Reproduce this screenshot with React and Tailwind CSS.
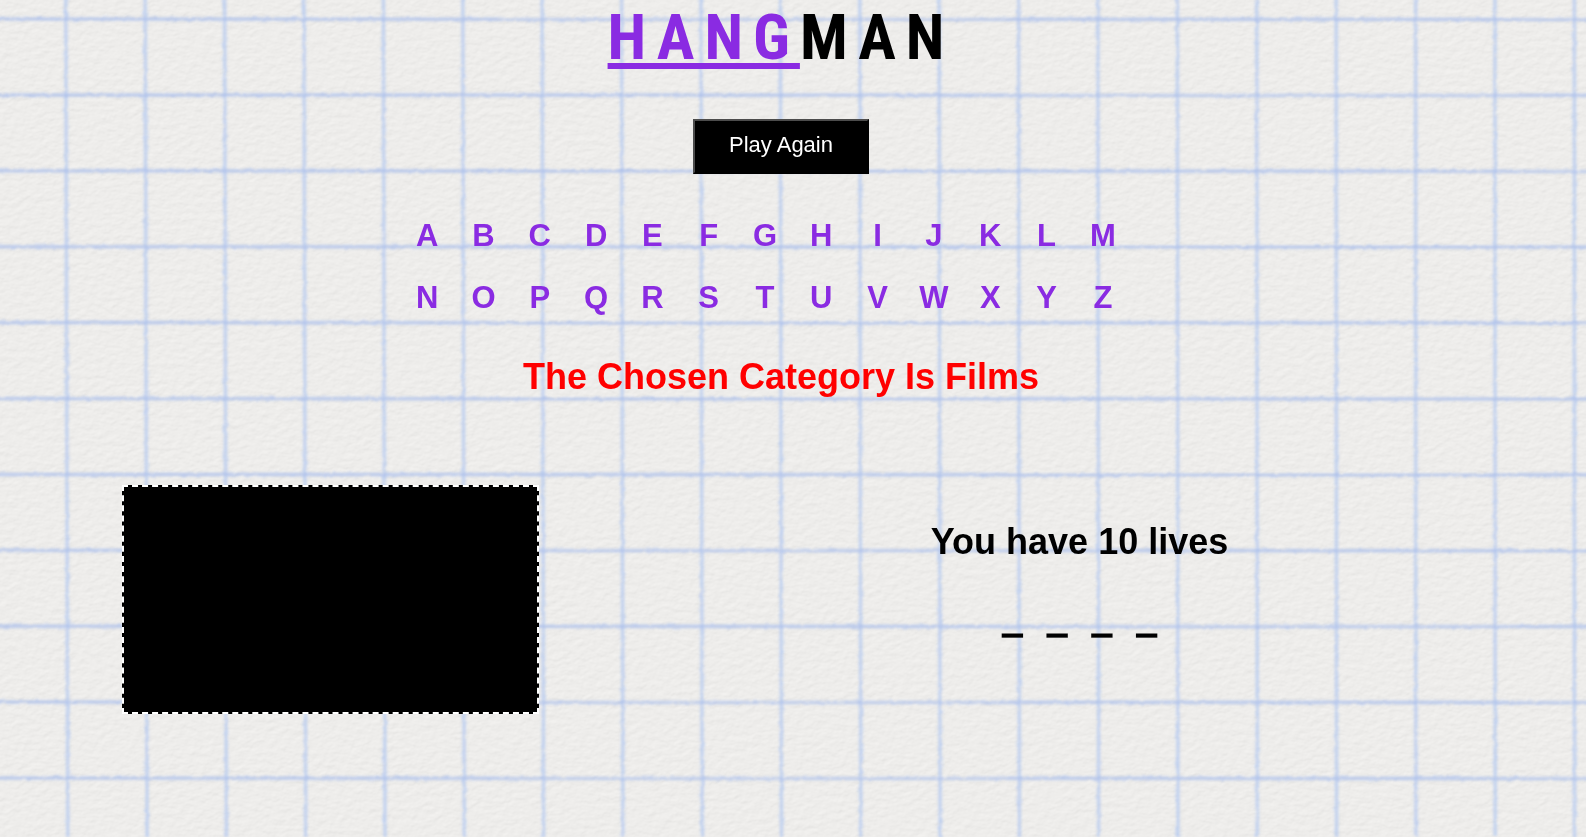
const ALPHABET = "ABCDEFGHIJKLMNOPQRSTUVWXYZ".split("");
const WORD = [0, 1, 2, 3];
const COLUMNS = Array.from({ length: 60 }, (_, i) => i);
const ROWS = Array.from({ length: 40 }, (_, i) => i);

function GraphPaper() {
  return (
    <svg className="absolute inset-0 -z-10 h-full w-full" aria-hidden="true">
      <defs>
        <filter id="paper" x="0" y="0" width="100%" height="100%" colorInterpolationFilters="sRGB">
          <feTurbulence type="fractalNoise" baseFrequency="0.12 0.18" numOctaves="3" seed="8" result="noise" />
          <feDiffuseLighting in="noise" lightingColor="#f6f5f3" surfaceScale="0.5" diffuseConstant="1.12">
            <feDistantLight azimuth="240" elevation="60" />
          </feDiffuseLighting>
        </filter>
        <filter id="ink" x="0" y="0" width="100%" height="100%" colorInterpolationFilters="sRGB">
          <feTurbulence type="fractalNoise" baseFrequency="0.15" numOctaves="3" seed="3" result="noise" />
          <feDisplacementMap in="SourceGraphic" in2="noise" scale="3" xChannelSelector="R" yChannelSelector="G" result="rough" />
          <feGaussianBlur in="rough" stdDeviation="0.9" />
        </filter>
      </defs>
      <rect width="100%" height="100%" fill="#eeedeb" />
      <rect width="100%" height="100%" filter="url(#paper)" opacity="0.24" />
      <g filter="url(#ink)">
        <rect width="100%" height="100%" fill="none" />
        {COLUMNS.map((i) => {
          const x = 65.8 + i * 79.4;
          const lean = Math.max(0, 2 - i * 0.1);
          return (
            <g key={i} stroke="#b4c9f0">
              <line x1={x} x2={x + lean} y1="-10" y2="837" strokeWidth="5" opacity="0.35" />
              <line x1={x} x2={x + lean} y1="-10" y2="837" strokeWidth="2" opacity="0.65" />
            </g>
          );
        })}
        {ROWS.map((i) => {
          const y = 19 + i * 75.9;
          return (
            <g key={i} stroke="#abbfeb">
              <line x1="-10" x2="4000" y1={y} y2={y + 1} strokeWidth="5" opacity="0.35" />
              <line x1="-10" x2="4000" y1={y} y2={y + 1} strokeWidth="2" opacity="0.65" />
            </g>
          );
        })}
      </g>
    </svg>
  );
}

export default function App() {
  return (
    <main className="relative isolate min-h-screen overflow-hidden pb-8 font-['Liberation_Sans',Arial,sans-serif] text-black">
      <GraphPaper />
      <header className="flex flex-col items-center pr-6">
        <h1 className="font-['Roboto_Condensed','Liberation_Sans_Narrow',Roboto,sans-serif] text-[63px] leading-[75px] font-bold tracking-[10px]">
          <span className="text-[#8a2be2] underline decoration-[6px] underline-offset-4">HANG</span>MAN
        </h1>
        <button
          type="button"
          className="mt-11 border-2 border-t-[#4c4c4c] border-r-black border-b-black border-l-[#4c4c4c] bg-black px-[34px] pt-3 pb-[15px] text-[22px] leading-6 text-white"
        >
          Play Again
        </button>
      </header>

      <section aria-label="Letters" className="mt-[31px] flex justify-center pr-14">
        <ul className="grid w-[732px] grid-cols-13">
          {ALPHABET.map((letter) => (
            <li key={letter} className="flex justify-center">
              <button type="button" className="text-[31px] leading-[62px] font-bold text-[#8a2be2]">
                {letter}
              </button>
            </li>
          ))}
        </ul>
      </section>

      <h2 className="mt-7 pr-6 text-center text-4xl leading-10 font-bold text-[#ff0000]">
        The Chosen Category Is Films
      </h2>

      <section className="mt-[88px] flex pl-[122px]">
        <canvas className="h-[229px] w-[417px] shrink-0 border-2 border-dashed border-white bg-black" />
        <div className="ml-[34px] flex-1 pt-[37px] text-center text-4xl leading-10 font-bold">
          <p>You have 10 lives</p>
          <ul className="mt-[39px] flex justify-center gap-[27px] text-[32px] [-webkit-text-stroke:3px_black]">
            {WORD.map((slot) => (
              <li key={slot}>_</li>
            ))}
          </ul>
        </div>
      </section>
    </main>
  );
}
